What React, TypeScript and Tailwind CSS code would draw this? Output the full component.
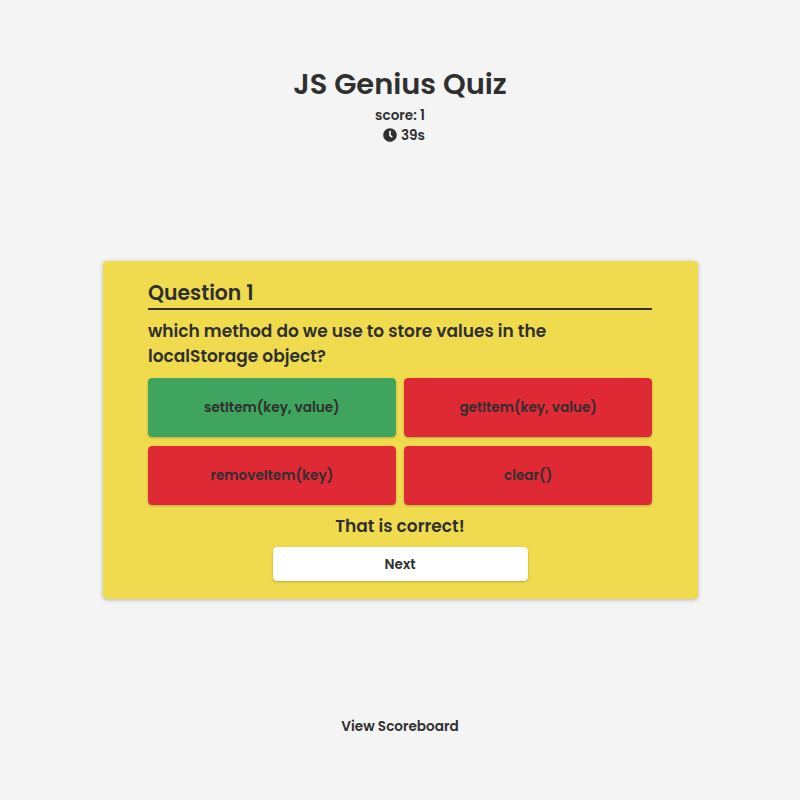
import { FaClock } from "react-icons/fa";

type Answer = { text: string; correct: boolean };

const answers: Answer[] = [
  { text: "setItem(key, value)", correct: true },
  { text: "getItem(key, value)", correct: false },
  { text: "removeItem(key)", correct: false },
  { text: "clear()", correct: false },
];

export default function App() {
  return (
    <main className="flex h-[800px] w-[800px] flex-col items-center bg-[#f4f4f4] font-['Poppins','Inter',sans-serif] text-[13.6px] font-semibold text-[#2f2f2f]">
      <header className="flex h-[260.5px] w-full flex-col items-center pt-[62px]">
        <h1 className="text-[28.9px] leading-[44px] whitespace-nowrap">JS Genius Quiz</h1>
        <div className="flex flex-col items-end text-right leading-[20.4px]">
          <p>score: 1</p>
          <p className="flex items-center gap-1">
            <FaClock className="-mt-[3px] size-3.5" />
            39s
          </p>
        </div>
      </header>

      <section className="flex h-[338px] w-[595px] flex-col rounded-[4.25px] bg-[#f0db4f] px-[45.5px] pt-[17px] shadow-[0_1px_4px_rgba(0,0,0,0.26)]">
        <h2 className="h-[32.3px] border-b-2 border-[#323330] text-[20.4px] leading-[30.6px]">Question 1</h2>
        <p className="mt-[9.2px] w-[420px] text-[17px] leading-[25.5px]">
          which method do we use to store values in the localStorage object?
        </p>
        <div className="mt-[8px] grid grid-cols-2 gap-x-[8.5px] gap-y-[9px]">
          {answers.map((a) => (
            <button
              key={a.text}
              className={`h-[59px] rounded-[4.25px] pt-px shadow-[0_1px_2.5px_rgba(0,0,0,0.24)] ${a.correct ? "bg-[#3fa45d]" : "bg-[#df2935]"}`}
            >
              {a.text}
            </button>
          ))}
        </div>
        <p className="mt-[8.7px] text-center text-[17px] leading-[25.5px]">That is correct!</p>
        <button className="mx-auto mt-[8.3px] h-[34px] w-[255px] rounded-[4.25px] bg-white pt-px shadow-[0_1px_2.5px_rgba(0,0,0,0.24)]">
          Next
        </button>
      </section>

      <a className="mt-[118px] leading-5">View Scoreboard</a>
    </main>
  );
}
